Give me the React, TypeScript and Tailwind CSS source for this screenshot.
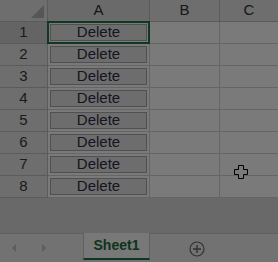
import React from 'react'

const rows = [1, 2, 3, 4, 5, 6, 7, 8]

function CrossCursor() {
  return (
    <svg width="14" height="14" viewBox="0 0 14 14" className="absolute left-[234px] top-[165px]">
      <path d="M4.5 0.5h5v4h4v5h-4v4h-5v-4h-4v-5h4z" fill="#fff" stroke="#000" strokeWidth="1" />
    </svg>
  )
}

export default function App() {
  return (
    <div className="relative w-[278px] h-[262px] overflow-hidden bg-[#dcdcdc] font-['Liberation_Sans',Arial,sans-serif]">
      {/* grid */}
      <div className="flex flex-col bg-white">
        {/* column headers */}
        <div className="flex h-[22px]">
          <div className="w-[48px] shrink-0 bg-[#e6e6e6] border-r border-b border-[#bfbfbf] flex items-end justify-end pr-[3px] pb-[3px]">
            <svg width="13" height="13" viewBox="0 0 13 13">
              <path d="M13 0V13H0Z" fill="#b4b4b4" />
            </svg>
          </div>
          <div className="w-[102px] shrink-0 bg-[#dedede] border-r border-b border-[#bfbfbf] flex items-center justify-center text-[15px] text-[#333]">A</div>
          <div className="w-[70px] shrink-0 bg-[#e6e6e6] border-r border-b border-[#bfbfbf] flex items-center justify-center text-[15px] text-[#333]">B</div>
          <div className="flex-1 bg-[#e6e6e6] border-b border-[#bfbfbf] flex items-center justify-center text-[15px] text-[#333]">C</div>
        </div>
        {rows.map((r) => (
          <div key={r} className="flex h-[22px]">
            <div className={`w-[48px] shrink-0 border-r border-b border-[#bfbfbf] flex items-center justify-center text-[15px] text-[#3a3a3a] ${r === 1 ? 'bg-[#d2d2d2]' : 'bg-[#e6e6e6]'}`}>
              {r}
            </div>
            <div className="w-[102px] shrink-0 border-r border-b border-[#d4d4d4] relative p-[2px]">
              <div className="h-full border border-[#a8a8a8] bg-[#e4e4e4] flex items-center justify-center text-[15px] text-[#2e2e48]">
                Delete
              </div>
              {r === 1 && <div className="absolute inset-[-1px] border-2 border-[#217346]" />}
            </div>
            <div className="w-[70px] shrink-0 border-r border-b border-[#d4d4d4]" />
            <div className="flex-1 border-b border-[#d4d4d4]" />
          </div>
        ))}
      </div>

      {/* empty area */}
      <div className="h-[35px] bg-[#dcdcdc]" />

      {/* sheet tabs */}
      <div className="flex h-[29px] border-t border-[#c6c6c6] bg-[#eeeeee] items-start">
        <div className="w-[83px] flex items-center gap-[22px] pl-[10px] pt-[9px]">
          <svg width="8" height="10" viewBox="0 0 8 10"><path d="M6 1L2 5l4 4" fill="#c4c4c4" /></svg>
          <svg width="8" height="10" viewBox="0 0 8 10"><path d="M2 1l4 4-4 4" fill="#c4c4c4" /></svg>
        </div>
        <div className="w-[67px] h-[27px] -mt-px bg-[#fafafa] border-x border-[#c6c6c6] border-b-2 border-b-[#217346] flex items-center justify-center text-[14px] font-bold text-[#1d6b40]">
          Sheet1
        </div>
        <div className="ml-[39px] mt-[7px]">
          <svg width="16" height="16" viewBox="0 0 16 16">
            <circle cx="8" cy="8" r="7" fill="none" stroke="#666" strokeWidth="1.2" />
            <path d="M8 4v8M4 8h8" stroke="#666" strokeWidth="1.4" />
          </svg>
        </div>
      </div>

      <CrossCursor />

      {/* modal dim */}
      <div className="absolute inset-0 bg-black/[0.52]" />
    </div>
  )
}
